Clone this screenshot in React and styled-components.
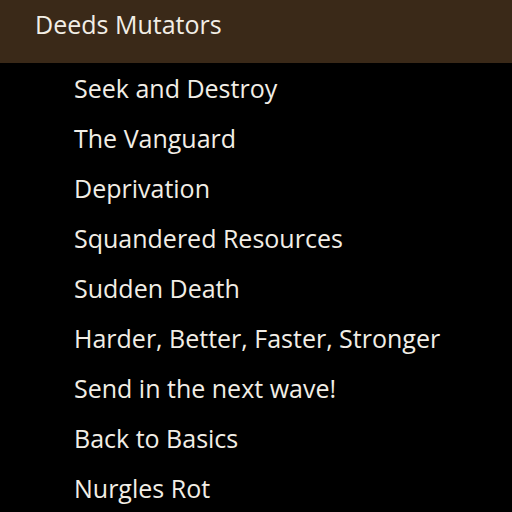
import React from "react";
import styled, { createGlobalStyle } from "styled-components";

const Global = createGlobalStyle`
  html, body {
    margin: 0;
    padding: 0;
    background: #000;
  }
  body {
    font-family: "Open Sans", "DejaVu Sans", sans-serif;
  }
`;

const Page = styled.div`
  width: 512px;
  height: 512px;
  overflow: hidden;
  background: #000;
`;

const Header = styled.div`
  height: 63px;
  background: #3a2918;
  display: flex;
  align-items: flex-start;
  padding: 7px 0 0 35px;
  box-sizing: border-box;
`;

const Title = styled.h1`
  margin: 0;
  font-weight: 400;
  font-size: 25px;
  line-height: 34px;
  color: #f2eee6;
`;

const List = styled.ul`
  list-style: none;
  margin: 0;
  padding: 7px 0 0 74px;
  display: flex;
  flex-direction: column;
`;

const Item = styled.li`
  height: 50px;
  font-size: 25px;
  line-height: 36px;
  color: #f2eee6;
  white-space: nowrap;
`;

const mutators = [
  "Seek and Destroy",
  "The Vanguard",
  "Deprivation",
  "Squandered Resources",
  "Sudden Death",
  "Harder, Better, Faster, Stronger",
  "Send in the next wave!",
  "Back to Basics",
  "Nurgles Rot",
];

export default function App() {
  return (
    <Page>
      <Global />
      <Header>
        <Title>Deeds Mutators</Title>
      </Header>
      <List>
        {mutators.map((m) => (
          <Item key={m}>{m}</Item>
        ))}
      </List>
    </Page>
  );
}
